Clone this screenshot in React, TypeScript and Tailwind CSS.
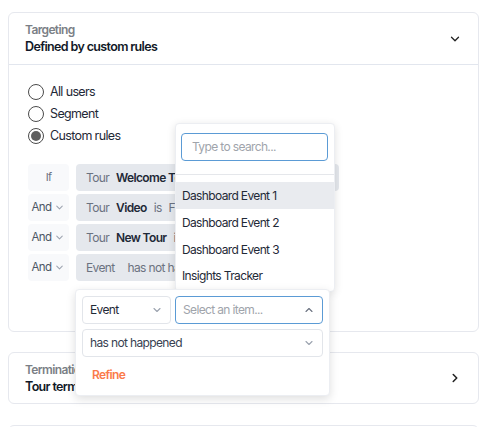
import React from "react";

const font = { fontFamily: "Inter, 'Noto Sans', sans-serif", letterSpacing: "-0.04em" };

function ChevronDown({ className = "" }: { className?: string }) {
  return (
    <svg viewBox="0 0 16 16" className={className} fill="none" stroke="currentColor" strokeWidth={1.5} strokeLinecap="round" strokeLinejoin="round">
      <path d="M4 6l4 4 4-4" />
    </svg>
  );
}
function ChevronUp({ className = "" }: { className?: string }) {
  return (
    <svg viewBox="0 0 16 16" className={className} fill="none" stroke="currentColor" strokeWidth={1.5} strokeLinecap="round" strokeLinejoin="round">
      <path d="M4 10l4-4 4 4" />
    </svg>
  );
}
function ChevronRight({ className = "" }: { className?: string }) {
  return (
    <svg viewBox="0 0 16 16" className={className} fill="none" stroke="currentColor" strokeWidth={1.8} strokeLinecap="round" strokeLinejoin="round">
      <path d="M6 4l4 4-4 4" />
    </svg>
  );
}

function Radio({ checked, label }: { checked?: boolean; label: string }) {
  return (
    <div className="flex h-[22px] items-center gap-[6px]">
      <div className="flex h-[16px] w-[16px] items-center justify-center rounded-full border-[1.5px] border-[#4b4b4b] bg-white">
        {checked && <div className="h-[10px] w-[10px] rounded-full bg-[#5f5f5f]" />}
      </div>
      <span className="text-[12.5px] text-[#1f2937]">{label}</span>
    </div>
  );
}

function RuleRow({ left, children, width }: { left: React.ReactNode; children: React.ReactNode; width: string }) {
  return (
    <div className="flex h-[27px] gap-[7px]">
      <div className="flex w-[41px] items-center justify-center gap-[3px] rounded-[4px] bg-[#f8f9fb] text-[11.5px] text-[#4b5563]">
        {left}
      </div>
      <div className={`flex items-center gap-[7px] overflow-hidden whitespace-nowrap rounded-[4px] bg-[#e5e8ed] pl-[10px] text-[12px] text-[#6b7280] ${width}`}>
        {children}
      </div>
    </div>
  );
}

export default function App() {
  return (
    <div className="relative h-[427px] w-[493px] overflow-hidden bg-white" style={font}>
      <div className="px-[8px] pt-[12px]">
        {/* Card 1 */}
        <div className="w-[471px] rounded-[6px] border border-[#e6e8ee] bg-white">
          <div className="flex h-[52px] items-center justify-between border-b border-[#e2e6ee] pl-[16px] pr-[16px]">
            <div className="flex flex-col gap-[2px]">
              <span className="text-[12px] font-semibold leading-[15px] text-[#7b7f86]">Targeting</span>
              <span className="text-[12.5px] font-semibold leading-[16px] text-[#111827]">Defined by custom rules</span>
            </div>
            <ChevronDown className="h-[14px] w-[14px] text-[#222]" />
          </div>
          <div className="pl-[19px] pt-[16px] pb-[50px]">
            <div className="flex flex-col">
              <Radio label="All users" />
              <Radio label="Segment" />
              <Radio label="Custom rules" checked />
            </div>
            <div className="mt-[17px] flex flex-col gap-[3px]">
              <RuleRow left={<span className="text-[#6b7280] text-[11px]">If</span>} width="w-[263px]">
                <span>Tour</span>
                <span className="font-semibold text-[#1f2937]">Welcome Tour</span>
              </RuleRow>
              <RuleRow left={<><span>And</span><ChevronDown className="h-[11px] w-[11px] text-[#9ca3af]" /></>} width="w-[250px]">
                <span>Tour</span>
                <span className="font-semibold text-[#1f2937]">Video</span>
                <span>is</span>
                <span>Finished</span>
              </RuleRow>
              <RuleRow left={<><span>And</span><ChevronDown className="h-[11px] w-[11px] text-[#9ca3af]" /></>} width="w-[250px]">
                <span>Tour</span>
                <span className="font-semibold text-[#1f2937]">New Tour</span>
                <span>is</span>
                <span>Finished</span>
              </RuleRow>
              <RuleRow left={<><span>And</span><ChevronDown className="h-[11px] w-[11px] text-[#9ca3af]" /></>} width="w-[250px]">
                <span>Event</span>
                <span className="ml-[6px]">has not happened</span>
              </RuleRow>
            </div>
          </div>
        </div>

        {/* Card 2 */}
        <div className="mt-[20px] flex h-[52px] w-[471px] items-center justify-between rounded-[6px] border border-[#e6e8ee] bg-white pl-[16px] pr-[16px]">
          <div className="flex flex-col gap-[2px]">
            <span className="text-[12px] font-semibold leading-[15px] text-[#7b7f86]">Termination</span>
            <span className="text-[12.5px] font-semibold leading-[16px] text-[#111827]">Tour terminates when finished</span>
          </div>
          <ChevronRight className="h-[14px] w-[14px] text-[#222]" />
        </div>

        {/* Card 3 */}
        <div className="mt-[21px] h-[60px] w-[471px] rounded-[6px] border border-[#e6e8ee] bg-white" />
      </div>

      {/* Search popup */}
      <div className="absolute left-[175px] top-[123px] w-[160px] h-[169px] rounded-[4px] border border-[#eceef2] bg-white shadow-[0_2px_8px_rgba(0,0,0,0.12)]">
        <div className="border-b border-[#e5e7eb] pl-[5px] pr-[6px] pt-[9px] pb-[13px]">
          <div className="flex h-[28px] items-center rounded-[4px] border border-[#5b9bd5] px-[10px] text-[12px] text-[#a0a4ab]">
            Type to search...
          </div>
        </div>
        <div className="mt-[7px] flex flex-col text-[12px] text-[#1f2937]">
          <div className="flex h-[27px] items-center bg-[#e9ebef] px-[6px]">Dashboard Event 1</div>
          <div className="flex h-[27px] items-center px-[6px]">Dashboard Event 2</div>
          <div className="flex h-[27px] items-center px-[6px]">Dashboard Event 3</div>
          <div className="flex h-[26px] items-center px-[6px]">Insights Tracker</div>
        </div>
      </div>

      {/* Rule editor popup */}
      <div className="absolute left-[75px] top-[289px] w-[255px] h-[107px] rounded-[4px] border border-[#eceef2] bg-white p-[6px] shadow-[0_3px_10px_rgba(0,0,0,0.13)]">
        <div className="flex gap-[4px]">
          <div className="flex h-[28px] w-[89px] items-center justify-between rounded-[4px] border border-[#e2e5ea] pl-[7px] pr-[7px] text-[12px] text-[#1f2937]">
            <span>Event</span>
            <ChevronDown className="h-[12px] w-[12px] text-[#9ca3af]" />
          </div>
          <div className="flex h-[28px] w-[148px] items-center justify-between rounded-[4px] border border-[#5b9bd5] pl-[7px] pr-[7px] text-[12px] text-[#a0a4ab]">
            <span>Select an item...</span>
            <ChevronUp className="h-[12px] w-[12px] text-[#6b7280]" />
          </div>
        </div>
        <div className="mt-[5px] flex h-[28px] w-[241px] items-center justify-between rounded-[4px] border border-[#e2e5ea] pl-[7px] pr-[7px] text-[12px] text-[#374151]">
          <span>has not happened</span>
          <ChevronDown className="h-[12px] w-[12px] text-[#9ca3af]" />
        </div>
        <div className="mt-[9px] pl-[10px] text-[12px] font-semibold text-[#fb7a4a]">Refine</div>
      </div>
    </div>
  );
}
